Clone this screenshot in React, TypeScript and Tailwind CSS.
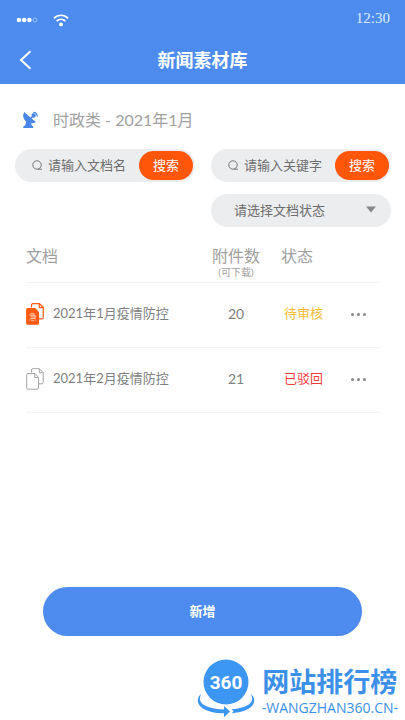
import { useState } from "react";

const docs = [
  { name: "2021年1月疫情防控", files: 20, status: "待审核", color: "text-[#f5bd3a]", urgent: true },
  { name: "2021年2月疫情防控", files: 21, status: "已驳回", color: "text-[#f03a40]", urgent: false },
];

function StatusBar() {
  return (
    <div className="flex h-9 items-center justify-between pr-[15px] pl-4">
      <div className="flex items-center gap-[14px] pt-1">
        <svg width="23" height="6" viewBox="0 0 23 6" fill="#fff" aria-hidden="true">
          <circle cx="3" cy="3" r="2.3" />
          <circle cx="8.2" cy="3" r="2.3" />
          <circle cx="13.4" cy="3" r="2.3" />
          <circle cx="19" cy="3" r="2" fill="none" stroke="#a9c9fa" strokeWidth="0.8" />
        </svg>
        <svg width="16" height="13" viewBox="0 0 16 13" fill="none" stroke="#fff" strokeWidth="1.7" aria-hidden="true">
          <path d="M1 4.3C5 .2 11 .2 15 4.3" />
          <path d="M3.6 7.2c2.6-2.5 6.2-2.5 8.8 0" />
          <circle cx="8" cy="10.4" r="1.9" fill="#fff" stroke="none" />
        </svg>
      </div>
      <time className="font-['Liberation_Serif',serif] text-[15px] text-[#dcebff]">12:30</time>
    </div>
  );
}

function DishIcon() {
  return (
    <svg width="17" height="18" viewBox="0 0 17 18" fill="#4a86e8" aria-hidden="true">
      <path d="M2.200 1C.6 4 .9 7.400 3.200 9.800l1 .9-1.200 3.900-1.700.9V17h9.900v-1.500l-1.400-.9-.7-2.300c1.700.1 3.400-.3 4.900-1.300L9.600 7.400l2-1.800-1-1.100-2.200 1.900Z" />
      <path d="M9.500 3.200c.8-1.200 2.300-1.400 3.400-.5 1 .9 1.100 2.300.3 3.300-.8.9-2.100 1-3 .3Z" />
      <path d="M11.200.8c3 .1 4.700 1.800 4.700 4.700l-1.200.2c0-2.200-1.300-3.600-3.500-3.700Z" />
    </svg>
  );
}

function DocIcon({ urgent }: { urgent: boolean }) {
  const line = urgent ? "#ff5a14" : "#a5a5a5";
  return (
    <svg
      className="shrink-0"
      width="18"
      height="22"
      viewBox="0 0 18 22"
      fill="none"
      stroke={line}
      strokeWidth={urgent ? 1.2 : 1}
      strokeLinejoin="round"
      aria-hidden="true"
    >
      <path d="M5.500 4.500V2A1.300 1.300 0 0 1 6.800.7h6.700l3.700 3.800v10A1.300 1.300 0 0 1 15.900 15.800H13" />
      <path d="M13.300.9v3.800h3.700" />
      <path
        d="M2 5.500h6.900l3.600 3.800v10.600a1.300 1.300 0 0 1-1.300 1.300H2A1.300 1.300 0 0 1 .7 19.900V6.800A1.300 1.300 0 0 1 2 5.500Z"
        fill={urgent ? line : "#fff"}
      />
      {urgent ? (
        <path
          d="M5.800 9.800 3.600 12M5.300 10.800h2.900l-.8 1.400M4.300 12.400h4.900v3.100H4.300M4.500 14h4.500M3.300 17.500l.6-1M5.200 16.700l.5 1h2.500M9.400 16.700l.7 1"
          stroke="#ffe0d0"
          strokeWidth="0.8"
        />
      ) : (
        <path d="M8.700 5.700v3.800h3.600" />
      )}
    </svg>
  );
}

function SearchBox({ id, label }: { id: string; label: string }) {
  const [value, setValue] = useState("");
  return (
    <form
      onSubmit={(e) => e.preventDefault()}
      className="flex h-[33px] min-w-0 items-center rounded-full bg-[#ecedef] pr-0.5 pl-[17px]"
    >
      <svg className="shrink-0" width="11" height="11" viewBox="0 0 11 11" fill="none" stroke="#777" aria-hidden="true">
        <circle cx="5" cy="5" r="4.200" />
        <path d="M6 9.200h4" />
      </svg>
      <input
        id={id}
        aria-label={label}
        placeholder={label}
        value={value}
        onChange={(e) => setValue(e.target.value)}
        className="ml-[5px] w-0 min-w-0 flex-1 bg-transparent text-[13px] text-[#666] outline-none placeholder:text-[#6e6e6e]"
      />
      <button type="submit" className="h-[29px] w-[54px] shrink-0 rounded-full bg-[#ff560a] text-[13px] text-white">
        搜索
      </button>
    </form>
  );
}

function SiteLogo() {
  return (
    <div className="flex items-end justify-end gap-1.5 pr-[7px]">
      <svg width="60" height="62" viewBox="0 0 60 62" aria-hidden="true">
        <circle cx="30" cy="24" r="22.500" fill="#3c96f4" />
        <path
          d="M5.500 35.500C-1 41 1 48.500 11 52.500c5 2 11 2.800 17 2.800v3.900l6-5.700-6-5.600v3.500c-6-.1-11-.9-15.500-2.500C4 46 2 41.500 5.500 35.500Z"
          fill="#3c96f4"
        />
        <path
          d="M54.500 35.500c3.500 6 1.500 10.500-7 13.400-3.500 1.200-7.500 2-12 2.300l2 2-1.700 2c5-.3 9-1.200 13.200-2.700 10-4 12-11.500 5.500-17Z"
          fill="#3c96f4"
        />
        <text
          x="30"
          y="31"
          textAnchor="middle"
          fill="#fff"
          className="font-['Roboto',sans-serif] text-[19px] font-bold"
        >
          360
        </text>
      </svg>
      <div className="flex flex-col items-center text-[#3c90e8]">
        <span className="text-[27px] leading-[36px] font-bold">网站排行榜</span>
        <span className="mb-1 font-['Open_Sans',sans-serif] text-sm leading-4">-WANGZHAN360.CN-</span>
      </div>
    </div>
  );
}

export default function App() {
  const [state, setState] = useState("");

  return (
    <div className="flex min-h-screen flex-col bg-white font-['Lato','Noto_Sans_CJK_SC',sans-serif] text-[#808080]">
      <header className="bg-[#4d8cee] text-white">
        <StatusBar />
        <div className="grid h-12 grid-cols-[1fr_auto_1fr] items-center px-[19px]">
          <button type="button" aria-label="返回" className="justify-self-start">
            <svg width="13" height="20" viewBox="0 0 13 20" fill="none" stroke="#fff" strokeWidth="2" aria-hidden="true">
              <path d="M11.500 1.200 2 10l9.500 8.800" />
            </svg>
          </button>
          <h1 className="text-lg font-bold">新闻素材库</h1>
        </div>
      </header>

      <main className="flex flex-1 flex-col">
        <h2 className="mt-6 flex h-6 items-center gap-[14px] pl-[22px] text-base text-[#a0a0a0]">
          <DishIcon />
          <span>时政类 - 2021年1月</span>
        </h2>

        <div className="mt-[17px] grid grid-cols-2 gap-x-4 gap-y-3 pr-[14px] pl-[15px]">
          <SearchBox id="doc-name" label="请输入文档名" />
          <SearchBox id="keyword" label="请输入关键字" />
          <div className="relative col-start-2">
            <select
              aria-label="请选择文档状态"
              value={state}
              onChange={(e) => setState(e.target.value)}
              className="h-[33px] w-full appearance-none rounded-full bg-[#ecedef] pr-8 pl-[23px] text-[13px] text-[#6e6e6e] outline-none"
            >
              <option value="">请选择文档状态</option>
              <option value="pending">待审核</option>
              <option value="rejected">已驳回</option>
            </select>
            <svg
              className="pointer-events-none absolute top-3 right-[15px]"
              width="10"
              height="7"
              viewBox="0 0 10 7"
              fill="#888"
              aria-hidden="true"
            >
              <path d="M0 .5h10L5 6.500Z" />
            </svg>
          </div>
        </div>

        <div className="mt-3 pr-6 pl-[26px]">
          <table className="w-full table-fixed text-[13px]">
            <colgroup>
              <col />
              <col className="w-[66px]" />
              <col className="w-[70px]" />
              <col className="w-[42px]" />
            </colgroup>
            <thead>
              <tr className="h-[43px] border-b border-[#f3f3f3] align-top text-base text-[#a0a0a0]">
                <th className="pt-[5px] text-left leading-6 font-normal">文档</th>
                <th className="pt-[5px] leading-6 font-normal">
                  附件数
                  <span className="-mt-0.5 block text-[10px] leading-3">(可下载)</span>
                </th>
                <th className="pt-[5px] pl-3 text-left leading-6 font-normal">状态</th>
                <th aria-label="操作" />
              </tr>
            </thead>
            <tbody>
              {docs.map((doc) => (
                <tr key={doc.name} className="h-[65px] border-b border-[#f3f3f3]">
                  <td className="pb-0.5">
                    <div className="flex items-center gap-[9px] whitespace-nowrap">
                      <DocIcon urgent={doc.urgent} />
                      {doc.name}
                    </div>
                  </td>
                  <td className="pb-0.5 text-center text-sm">{doc.files}</td>
                  <td className={`pb-0.5 pl-[15px] ${doc.color}`}>{doc.status}</td>
                  <td>
                    <button type="button" aria-label="更多" className="ml-3 flex h-6 items-center gap-[3px]">
                      <span className="size-[3px] rounded-full bg-[#888]" />
                      <span className="size-[3px] rounded-full bg-[#888]" />
                      <span className="size-[3px] rounded-full bg-[#888]" />
                    </button>
                  </td>
                </tr>
              ))}
            </tbody>
          </table>
        </div>

        <div className="mt-auto px-[43px] pt-8">
          <button type="button" className="h-[49px] w-full rounded-full bg-[#4d8cee] text-[13px] font-bold text-white">
            新增
          </button>
        </div>
      </main>

      <footer className="mt-[22px]">
        <SiteLogo />
      </footer>
    </div>
  );
}
